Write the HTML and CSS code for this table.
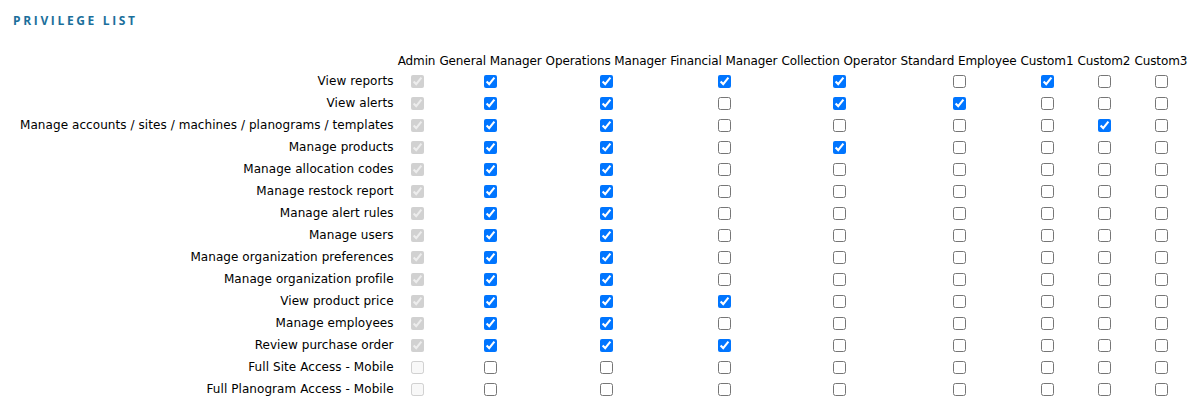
FILE: index.html
```html
<!DOCTYPE html>
<html>
<head>
<meta charset="utf-8">
<link rel="stylesheet" href="styles.css">
</head>
<body>
<h2 class="title">PRIVILEGE LIST</h2>
<table class="priv">
<thead>
<tr><th></th><th>Admin</th><th>General Manager</th><th>Operations Manager</th><th>Financial Manager</th><th>Collection Operator</th><th>Standard Employee</th><th>Custom1</th><th>Custom2</th><th>Custom3</th></tr>
</thead>
<tbody>
<tr><td class="lbl">View reports</td><td><input type="checkbox" checked disabled></td><td><input type="checkbox" checked></td><td><input type="checkbox" checked></td><td><input type="checkbox" checked></td><td><input type="checkbox" checked></td><td><input type="checkbox"></td><td><input type="checkbox" checked></td><td><input type="checkbox"></td><td><input type="checkbox"></td></tr>
<tr><td class="lbl">View alerts</td><td><input type="checkbox" checked disabled></td><td><input type="checkbox" checked></td><td><input type="checkbox" checked></td><td><input type="checkbox"></td><td><input type="checkbox" checked></td><td><input type="checkbox" checked></td><td><input type="checkbox"></td><td><input type="checkbox"></td><td><input type="checkbox"></td></tr>
<tr><td class="lbl">Manage accounts / sites / machines / planograms / templates</td><td><input type="checkbox" checked disabled></td><td><input type="checkbox" checked></td><td><input type="checkbox" checked></td><td><input type="checkbox"></td><td><input type="checkbox"></td><td><input type="checkbox"></td><td><input type="checkbox"></td><td><input type="checkbox" checked></td><td><input type="checkbox"></td></tr>
<tr><td class="lbl">Manage products</td><td><input type="checkbox" checked disabled></td><td><input type="checkbox" checked></td><td><input type="checkbox" checked></td><td><input type="checkbox"></td><td><input type="checkbox" checked></td><td><input type="checkbox"></td><td><input type="checkbox"></td><td><input type="checkbox"></td><td><input type="checkbox"></td></tr>
<tr><td class="lbl">Manage allocation codes</td><td><input type="checkbox" checked disabled></td><td><input type="checkbox" checked></td><td><input type="checkbox" checked></td><td><input type="checkbox"></td><td><input type="checkbox"></td><td><input type="checkbox"></td><td><input type="checkbox"></td><td><input type="checkbox"></td><td><input type="checkbox"></td></tr>
<tr><td class="lbl">Manage restock report</td><td><input type="checkbox" checked disabled></td><td><input type="checkbox" checked></td><td><input type="checkbox" checked></td><td><input type="checkbox"></td><td><input type="checkbox"></td><td><input type="checkbox"></td><td><input type="checkbox"></td><td><input type="checkbox"></td><td><input type="checkbox"></td></tr>
<tr><td class="lbl">Manage alert rules</td><td><input type="checkbox" checked disabled></td><td><input type="checkbox" checked></td><td><input type="checkbox" checked></td><td><input type="checkbox"></td><td><input type="checkbox"></td><td><input type="checkbox"></td><td><input type="checkbox"></td><td><input type="checkbox"></td><td><input type="checkbox"></td></tr>
<tr><td class="lbl">Manage users</td><td><input type="checkbox" checked disabled></td><td><input type="checkbox" checked></td><td><input type="checkbox" checked></td><td><input type="checkbox"></td><td><input type="checkbox"></td><td><input type="checkbox"></td><td><input type="checkbox"></td><td><input type="checkbox"></td><td><input type="checkbox"></td></tr>
<tr><td class="lbl">Manage organization preferences</td><td><input type="checkbox" checked disabled></td><td><input type="checkbox" checked></td><td><input type="checkbox" checked></td><td><input type="checkbox"></td><td><input type="checkbox"></td><td><input type="checkbox"></td><td><input type="checkbox"></td><td><input type="checkbox"></td><td><input type="checkbox"></td></tr>
<tr><td class="lbl">Manage organization profile</td><td><input type="checkbox" checked disabled></td><td><input type="checkbox" checked></td><td><input type="checkbox" checked></td><td><input type="checkbox"></td><td><input type="checkbox"></td><td><input type="checkbox"></td><td><input type="checkbox"></td><td><input type="checkbox"></td><td><input type="checkbox"></td></tr>
<tr><td class="lbl">View product price</td><td><input type="checkbox" checked disabled></td><td><input type="checkbox" checked></td><td><input type="checkbox" checked></td><td><input type="checkbox" checked></td><td><input type="checkbox"></td><td><input type="checkbox"></td><td><input type="checkbox"></td><td><input type="checkbox"></td><td><input type="checkbox"></td></tr>
<tr><td class="lbl">Manage employees</td><td><input type="checkbox" checked disabled></td><td><input type="checkbox" checked></td><td><input type="checkbox" checked></td><td><input type="checkbox"></td><td><input type="checkbox"></td><td><input type="checkbox"></td><td><input type="checkbox"></td><td><input type="checkbox"></td><td><input type="checkbox"></td></tr>
<tr><td class="lbl">Review purchase order</td><td><input type="checkbox" checked disabled></td><td><input type="checkbox" checked></td><td><input type="checkbox" checked></td><td><input type="checkbox" checked></td><td><input type="checkbox"></td><td><input type="checkbox"></td><td><input type="checkbox"></td><td><input type="checkbox"></td><td><input type="checkbox"></td></tr>
<tr><td class="lbl">Full Site Access - Mobile</td><td><input type="checkbox" disabled></td><td><input type="checkbox"></td><td><input type="checkbox"></td><td><input type="checkbox"></td><td><input type="checkbox"></td><td><input type="checkbox"></td><td><input type="checkbox"></td><td><input type="checkbox"></td><td><input type="checkbox"></td></tr>
<tr><td class="lbl">Full Planogram Access - Mobile</td><td><input type="checkbox" disabled></td><td><input type="checkbox"></td><td><input type="checkbox"></td><td><input type="checkbox"></td><td><input type="checkbox"></td><td><input type="checkbox"></td><td><input type="checkbox"></td><td><input type="checkbox"></td><td><input type="checkbox"></td></tr>
</tbody>
</table>
</body>
</html>
```
FILE: styles.css
```css
body {
  margin: 0;
  background: #fff;
  font-family: "DejaVu Sans", sans-serif;
  font-size: 12px;
  color: #000;
}
.title {
  margin: 0;
  padding: 14px 0 0 13px;
  font-family: "Open Sans", sans-serif;
  font-size: 12px;
  font-weight: 700;
  letter-spacing: 2.65px;
  color: #1b6f9b;
  line-height: 14px;
}
.priv {
  margin: 24px 0 0 17px;
  border-collapse: separate;
  border-spacing: 2px;
}
.priv th {
  font-weight: normal;
  padding: 0 1px;
  text-align: center;
  white-space: nowrap;
  line-height: 15px;
  letter-spacing: -0.1px;
}
.priv td {
  padding: 0 1px;
  text-align: center;
  height: 20px;
}
.priv td.lbl {
  text-align: right;
  white-space: nowrap;
  letter-spacing: 0.07px;
}
.priv input {
  margin: 3px 3px 3px 4px;
  vertical-align: middle;
}
```
